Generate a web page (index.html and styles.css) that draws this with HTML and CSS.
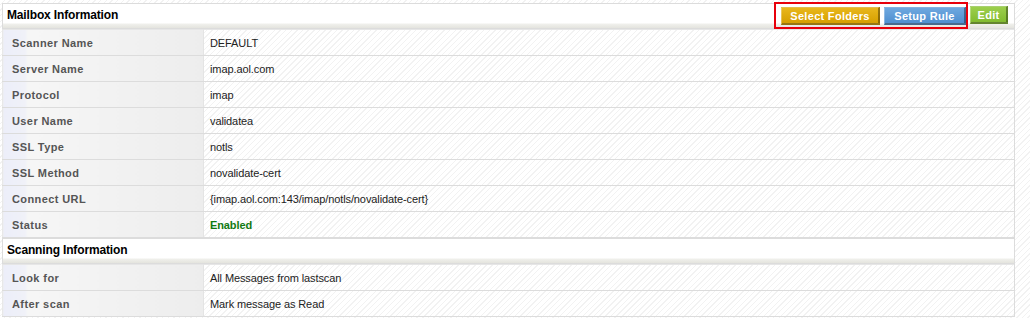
FILE: index.html
```html
<!DOCTYPE html>
<html lang="en">
<head>
    <meta charset="UTF-8">
    <title>Mailbox Information</title>
    <link rel="stylesheet" href="styles.css">
</head>
<body>
    <div class="panel">
        <div class="section-head">
            <div class="section-title">Mailbox Information</div>
            <div class="actions">
                <div class="highlight">
                    <a class="btn btn-gold">Select Folders</a>
                    <a class="btn btn-blue">Setup Rule</a>
                </div>
                <a class="btn btn-green">Edit</a>
            </div>
        </div>
        <table class="info">
            <tr><td class="label">Scanner Name</td><td class="value">DEFAULT</td></tr>
            <tr><td class="label">Server Name</td><td class="value">imap.aol.com</td></tr>
            <tr><td class="label">Protocol</td><td class="value">imap</td></tr>
            <tr><td class="label">User Name</td><td class="value">validatea</td></tr>
            <tr><td class="label">SSL Type</td><td class="value">notls</td></tr>
            <tr><td class="label">SSL Method</td><td class="value">novalidate-cert</td></tr>
            <tr><td class="label">Connect URL</td><td class="value">{imap.aol.com:143/imap/notls/novalidate-cert}</td></tr>
            <tr><td class="label">Status</td><td class="value"><span class="enabled">Enabled</span></td></tr>
        </table>
        <div class="section-head">
            <div class="section-title">Scanning Information</div>
        </div>
        <table class="info">
            <tr><td class="label">Look for</td><td class="value">All Messages from lastscan</td></tr>
            <tr><td class="label">After scan</td><td class="value">Mark message as Read</td></tr>
        </table>
    </div>
</body>
</html>
```
FILE: styles.css
```css
body {
    margin: 0;
    padding: 3px 2px 0;
    font-family: "Liberation Sans", Arial, sans-serif;
    font-size: 11px;
    color: #222;
    background-color: #fff;
    background-image: repeating-linear-gradient(135deg, #fff 0, #fff 3px, #f2f2f2 3px, #f2f2f2 4px);
    min-height: 318px;
    box-sizing: border-box;
}
.panel {
    width: 1013px;
}
.section-head {
    height: 26px;
    box-sizing: border-box;
    border: 1px solid #dcdcdc;
    background: linear-gradient(to bottom, #fff 0, #fff 19px, #f0f0ec 20px, #e4e4de 24px, #dadad4 25px);
    display: flex;
    align-items: center;
    justify-content: space-between;
    padding: 0 6px 2px 4px;
}
.section-title {
    font-size: 12px;
    font-weight: bold;
    color: #000;
    letter-spacing: -0.15px;
}
.actions {
    display: flex;
    align-items: center;
    gap: 2px;
    height: 100%;
}
.highlight {
    display: flex;
    align-items: center;
    gap: 4px;
    border: 2px solid #e8000b;
    height: 27px;
    box-sizing: border-box;
    padding: 0 0 0 5px;
    margin-top: 1px;
    width: 194px;
}
.btn {
    display: block;
    height: 18px;
    line-height: 17px;
    box-sizing: border-box;
    padding: 0 6px;
    font-weight: bold;
    font-size: 11px;
    color: #fff;
    letter-spacing: 0.3px;
    text-align: center;
    cursor: pointer;
    border-right: 2px solid rgba(0, 0, 0, 0.35);
    border-bottom: 2px solid rgba(0, 0, 0, 0.35);
    border-top: 1px solid rgba(255, 255, 255, 0.3);
    border-left: 1px solid rgba(255, 255, 255, 0.3);
}
.btn-gold {
    background: linear-gradient(to bottom, #e8b71c, #d69f00);
    width: 99px;
}
.btn-blue {
    background: linear-gradient(to bottom, #6ea8df, #4f8fd0);
    width: 82px;
}
.btn-green {
    background: linear-gradient(to bottom, #9ccf4c, #82bb30);
    width: 38px;
}
.info {
    width: 100%;
    border-collapse: collapse;
}
.info td {
    height: 25px;
    padding: 0;
    border-bottom: 1px solid #dcdcdc;
}
.info tr:first-child td {
    border-top: 1px solid #e6e6e6;
}
.label {
    width: 201px;
    padding-left: 9px !important;
    box-sizing: border-box;
    font-weight: bold;
    color: #555;
    letter-spacing: 0.4px;
    background: linear-gradient(to right, #eceef9 0, #f0f1f8 22px, #f6f6f6 24px, #ededed 100%);
    border-right: 1px solid #e4e4e4;
    border-left: 1px solid #e8e8e8;
}
.value {
    padding-left: 6px !important;
    border-right: 1px solid #dcdcdc;
    letter-spacing: -0.1px;
}
.enabled {
    color: #117a11;
    font-weight: bold;
}
```
